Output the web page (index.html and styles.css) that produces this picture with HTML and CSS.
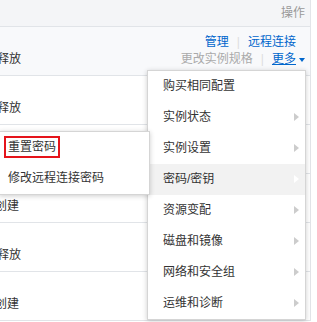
FILE: index.html
```html
<!DOCTYPE html>
<html lang="zh-CN">
<head>
  <meta charset="UTF-8" />
  <title>实例列表</title>
  <link rel="stylesheet" href="styles.css">
</head>
<body>
  <div class="page">
    <div class="grid">
      <div class="grid-head"><span>操作</span></div>

      <div class="grid-row is-hover">
        <div class="cell-status st-release">释放</div>
        <div class="cell-actions">
          <div class="action-line"><a>管理</a><span class="sep">|</span><a>远程连接</a></div>
          <div class="action-line"><span class="disabled">更改实例规格</span><span class="sep">|</span><a class="more">更多</a><i class="caret"></i></div>
        </div>
      </div>

      <div class="grid-row">
        <div class="cell-status st-release">释放</div>
      </div>

      <div class="grid-row">
        <div class="cell-status st-create"></div>
      </div>

      <div class="grid-row">
        <div class="cell-status st-create">创建</div>
      </div>

      <div class="grid-row">
        <div class="cell-status st-release">释放</div>
      </div>

      <div class="grid-row">
        <div class="cell-status st-create">创建</div>
      </div>
    </div>

    <ul class="menu">
      <li>购买相同配置</li>
      <li class="has-sub">实例状态</li>
      <li class="has-sub">实例设置</li>
      <li class="has-sub active">密码/密钥</li>
      <li class="has-sub">资源变配</li>
      <li class="has-sub">磁盘和镜像</li>
      <li class="has-sub">网络和安全组</li>
      <li class="has-sub">运维和诊断</li>
    </ul>

    <ul class="submenu">
      <li><span class="mark">重置密码</span></li>
      <li>修改远程连接密码</li>
    </ul>
  </div>
</body>
</html>
```

FILE: styles.css
```css
body {
  margin: 0;
  font-family: "Liberation Sans", "Noto Sans CJK SC", sans-serif;
  font-size: 12px;
  color: #333;
  background-color: white;
}

.page {
  position: relative;
  height: 322px;
  overflow: hidden;
}

.grid {
  width: 311px;
  border-right: 1px solid #e3e5e9;
  box-sizing: border-box;
}

.grid-head {
  height: 26px;
  line-height: 26px;
  background-color: #f4f5f7;
  border-bottom: 1px solid #e1e4e8;
  text-align: right;
  padding-right: 5px;
  color: #999;
}

.grid-row {
  display: flex;
  height: 48px;
  border-bottom: 1px solid #e1e4e8;
  line-height: 17px;
}

.grid-row.is-hover {
  background-color: #f8f9fb;
}

.cell-status {
  padding-top: 24px;
  white-space: nowrap;
}

.st-release {
  margin-left: -3px;
}

.st-create {
  margin-left: -5px;
}

.cell-actions {
  margin-left: auto;
  padding-top: 7px;
  padding-right: 14px;
}

.action-line {
  display: flex;
  justify-content: flex-end;
  align-items: center;
  white-space: nowrap;
}

.action-line a {
  color: #06c;
  text-decoration: none;
}

.action-line a.more {
  text-decoration: underline;
}

.disabled {
  color: #aaa;
}

.sep {
  color: #ddd;
  margin: 0 8px;
}

.caret {
  display: inline-block;
  width: 0;
  height: 0;
  border-top: 4px solid #06c;
  border-left: 3px solid transparent;
  border-right: 3px solid transparent;
  margin-left: 3px;
  margin-right: -9px;
}

.menu,
.submenu {
  list-style: none;
  margin: 0;
  padding: 0;
  background-color: white;
  border: 1px solid #d5d5d5;
  box-shadow: 0 1px 5px rgba(0,0,0,0.2);
  box-sizing: border-box;
}

.menu {
  position: absolute;
  left: 147px;
  top: 70px;
  width: 159px;
}

.menu li,
.submenu li {
  position: relative;
  height: 31px;
  line-height: 31px;
  white-space: nowrap;
}

.menu li {
  padding-left: 15px;
}

.menu li.active {
  background-color: #f2f2f2;
}

.menu li.has-sub::after {
  content: "";
  position: absolute;
  right: 6px;
  top: 11px;
  border-left: 5px solid #ccc;
  border-top: 4px solid transparent;
  border-bottom: 4px solid transparent;
}

.menu li.active::after {
  border-left-color: white;
}

.submenu {
  position: absolute;
  left: -1px;
  top: 131px;
  width: 151px;
  z-index: 2;
}

.submenu li {
  padding-left: 8px;
}

.mark {
  border: 2px solid #e5141b;
  padding: 2px 2px;
  margin-left: -4px;
  line-height: 17px;
}
```
